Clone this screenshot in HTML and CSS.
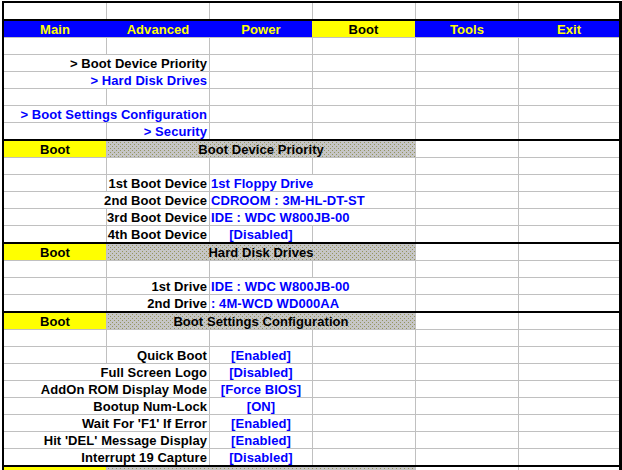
FILE: index.html
```html
<!DOCTYPE html>
<html lang="en">
<head>
  <meta charset="UTF-8">
  <title>BIOS Boot Menu</title>
  <link rel="stylesheet" href="styles.css">
</head>
<body>

<div class="sheet">
  <div class="row">
    <div class="cell"></div><div class="cell"></div><div class="cell"></div>
    <div class="cell"></div><div class="cell"></div><div class="cell"></div>
  </div>

  <!-- Menu tabs -->
  <div class="row sep tabs">
    <div class="cell">Main</div>
    <div class="cell">Advanced</div>
    <div class="cell">Power</div>
    <div class="cell on">Boot</div>
    <div class="cell">Tools</div>
    <div class="cell">Exit</div>
  </div>

  <div class="row">
    <div class="cell"></div><div class="cell"></div><div class="cell"></div>
    <div class="cell"></div><div class="cell"></div><div class="cell"></div>
  </div>
  <div class="row">
    <div class="cell"></div>
    <div class="cell r"><span class="txt">&gt; Boot Device Priority</span></div>
    <div class="cell"></div><div class="cell"></div><div class="cell"></div><div class="cell"></div>
  </div>
  <div class="row">
    <div class="cell"></div>
    <div class="cell r blue"><span class="txt">&gt; Hard Disk Drives</span></div>
    <div class="cell"></div><div class="cell"></div><div class="cell"></div><div class="cell"></div>
  </div>
  <div class="row">
    <div class="cell"></div><div class="cell"></div><div class="cell"></div>
    <div class="cell"></div><div class="cell"></div><div class="cell"></div>
  </div>
  <div class="row">
    <div class="cell"></div>
    <div class="cell r blue"><span class="txt">&gt; Boot Settings Configuration</span></div>
    <div class="cell"></div><div class="cell"></div><div class="cell"></div><div class="cell"></div>
  </div>
  <div class="row">
    <div class="cell"></div>
    <div class="cell r blue"><span class="txt">&gt; Security</span></div>
    <div class="cell"></div><div class="cell"></div><div class="cell"></div><div class="cell"></div>
  </div>

  <!-- Boot Device Priority -->
  <div class="row sep">
    <div class="cell boot">Boot</div>
    <div class="cell title">Boot Device Priority</div>
    <div class="cell"></div><div class="cell"></div>
  </div>
  <div class="row">
    <div class="cell"></div><div class="cell"></div><div class="cell"></div>
    <div class="cell"></div><div class="cell"></div><div class="cell"></div>
  </div>
  <div class="row">
    <div class="cell"></div>
    <div class="cell r"><span class="txt">1st Boot Device</span></div>
    <div class="cell l blue"><span class="txt">1st Floppy Drive</span></div>
    <div class="cell"></div><div class="cell"></div><div class="cell"></div>
  </div>
  <div class="row">
    <div class="cell"></div>
    <div class="cell r"><span class="txt">2nd Boot Device</span></div>
    <div class="cell l blue"><span class="txt">CDROOM : 3M-HL-DT-ST</span></div>
    <div class="cell"></div><div class="cell"></div><div class="cell"></div>
  </div>
  <div class="row">
    <div class="cell"></div>
    <div class="cell r"><span class="txt">3rd Boot Device</span></div>
    <div class="cell l blue"><span class="txt">IDE : WDC W800JB-00</span></div>
    <div class="cell"></div><div class="cell"></div><div class="cell"></div>
  </div>
  <div class="row">
    <div class="cell"></div>
    <div class="cell r"><span class="txt">4th Boot Device</span></div>
    <div class="cell c blue"><span class="txt">[Disabled]</span></div>
    <div class="cell"></div><div class="cell"></div><div class="cell"></div>
  </div>

  <!-- Hard Disk Drives -->
  <div class="row sep">
    <div class="cell boot">Boot</div>
    <div class="cell title">Hard Disk Drives</div>
    <div class="cell"></div><div class="cell"></div>
  </div>
  <div class="row">
    <div class="cell"></div><div class="cell"></div><div class="cell"></div>
    <div class="cell"></div><div class="cell"></div><div class="cell"></div>
  </div>
  <div class="row">
    <div class="cell"></div>
    <div class="cell r"><span class="txt">1st Drive</span></div>
    <div class="cell l blue"><span class="txt">IDE : WDC W800JB-00</span></div>
    <div class="cell"></div><div class="cell"></div><div class="cell"></div>
  </div>
  <div class="row">
    <div class="cell"></div>
    <div class="cell r"><span class="txt">2nd Drive</span></div>
    <div class="cell l blue"><span class="txt">: 4M-WCD WD000AA</span></div>
    <div class="cell"></div><div class="cell"></div><div class="cell"></div>
  </div>

  <!-- Boot Settings Configuration -->
  <div class="row sep">
    <div class="cell boot">Boot</div>
    <div class="cell title">Boot Settings Configuration</div>
    <div class="cell"></div><div class="cell"></div>
  </div>
  <div class="row">
    <div class="cell"></div><div class="cell"></div><div class="cell"></div>
    <div class="cell"></div><div class="cell"></div><div class="cell"></div>
  </div>
  <div class="row">
    <div class="cell"></div>
    <div class="cell r"><span class="txt">Quick Boot</span></div>
    <div class="cell c blue"><span class="txt">[Enabled]</span></div>
    <div class="cell"></div><div class="cell"></div><div class="cell"></div>
  </div>
  <div class="row">
    <div class="cell"></div>
    <div class="cell r"><span class="txt">Full Screen Logo</span></div>
    <div class="cell c blue"><span class="txt">[Disabled]</span></div>
    <div class="cell"></div><div class="cell"></div><div class="cell"></div>
  </div>
  <div class="row">
    <div class="cell"></div>
    <div class="cell r"><span class="txt">AddOn ROM Display Mode</span></div>
    <div class="cell c blue"><span class="txt">[Force BIOS]</span></div>
    <div class="cell"></div><div class="cell"></div><div class="cell"></div>
  </div>
  <div class="row">
    <div class="cell"></div>
    <div class="cell r"><span class="txt">Bootup Num-Lock</span></div>
    <div class="cell c blue"><span class="txt">[ON]</span></div>
    <div class="cell"></div><div class="cell"></div><div class="cell"></div>
  </div>
  <div class="row">
    <div class="cell"></div>
    <div class="cell r"><span class="txt">Wait For 'F1' If Error</span></div>
    <div class="cell c blue"><span class="txt">[Enabled]</span></div>
    <div class="cell"></div><div class="cell"></div><div class="cell"></div>
  </div>
  <div class="row">
    <div class="cell"></div>
    <div class="cell r"><span class="txt">Hit 'DEL' Message Display</span></div>
    <div class="cell c blue"><span class="txt">[Enabled]</span></div>
    <div class="cell"></div><div class="cell"></div><div class="cell"></div>
  </div>
  <div class="row">
    <div class="cell"></div>
    <div class="cell r"><span class="txt">Interrupt 19 Capture</span></div>
    <div class="cell c blue"><span class="txt">[Disabled]</span></div>
    <div class="cell"></div><div class="cell"></div><div class="cell"></div>
  </div>

  <!-- next section, cut off -->
  <div class="row sep">
    <div class="cell boot"></div>
    <div class="cell title"></div>
    <div class="cell"></div><div class="cell"></div>
  </div>
</div>

</body>
</html>
```

FILE: styles.css
```css
html,
body {
  margin: 0;
  overflow: hidden;
}
body {
  background: #fff;
  color: #000;
  font: bold 13px/15px "Liberation Sans", Arial, sans-serif;
  letter-spacing: 0.07px;
}
.sheet {
  width: 615px;
  margin: 1px 0 0 2px;
  border-top: 2px solid #000;
  border-left: 2px solid #000;
  border-right: 3px solid #000;
  background: #c0c0c0;
  display: flex;
  flex-direction: column;
  gap: 1px;
}
.row {
  display: grid;
  grid-template-columns: repeat(5, 102px) 100px;
  column-gap: 1px;
  height: 16px;
}
.sep {
  border-top: 2px solid #000;
  margin-top: -1px;
}
.cell {
  background: #fff;
  display: flex;
  min-width: 0;
  padding-top: 1px;
  white-space: nowrap;
}
/* text that spills into the next cell hides its grid line, as in Excel */
.txt {
  position: relative;
  z-index: 1;
  background: #fff;
  margin-top: -1px;
  padding-top: 1px;
}
.r {
  justify-content: flex-end;
  padding-right: 2px;
}
.l {
  padding-left: 1px;
}
.c {
  justify-content: center;
}
.blue {
  color: #0000ff;
}
.tabs {
  background: #0000ff;
}
.tabs .cell {
  background: transparent;
  color: #ffff00;
  justify-content: center;
}
.tabs .on {
  background: #ffff00;
  color: #000;
  margin-left: -1px;
}
.boot {
  background: #ffff00;
  justify-content: center;
}
.title {
  grid-column: span 3;
  justify-content: center;
  background-color: #c6c6c6;
  background-image:
    conic-gradient(at 1px 1px, transparent 75%, #94945c 0),
    conic-gradient(at 1px 1px, transparent 75%, #94945c 0);
  background-size: 4px 4px;
  background-position: 1px 1px, 3px 3px;
}
```
